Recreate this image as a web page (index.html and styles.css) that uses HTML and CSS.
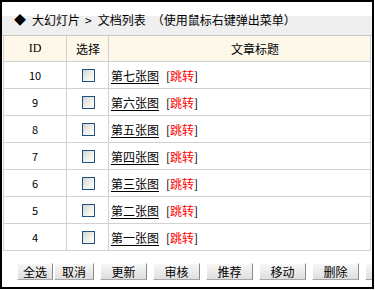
FILE: index.html
```html
<!DOCTYPE html>
<html lang="zh-CN">
<head>
<meta charset="utf-8">
<title>文档列表</title>
<link rel="stylesheet" href="styles.css">
</head>
<body>
<div class="frame">
  <div class="titlebar"><span class="diamond">◆</span><span class="crumb">大幻灯片</span><span class="sep">&gt;</span><span class="crumb">文档列表</span><span class="hint">（使用鼠标右键弹出菜单）</span></div>
  <div class="list">
    <div class="row head">
      <div class="cell c-id"><span class="latin">ID</span></div>
      <div class="cell c-sel">选择</div>
      <div class="cell c-title c-title-head">文章标题</div>
    </div>
    <div class="row">
      <div class="cell c-id">10</div>
      <div class="cell c-sel"><span class="chk"></span></div>
      <div class="cell c-title"><a href="#" class="link">第七张图</a><span class="jump">[<span class="red">跳转</span>]</span></div>
    </div>
    <div class="row">
      <div class="cell c-id">9</div>
      <div class="cell c-sel"><span class="chk"></span></div>
      <div class="cell c-title"><a href="#" class="link">第六张图</a><span class="jump">[<span class="red">跳转</span>]</span></div>
    </div>
    <div class="row">
      <div class="cell c-id">8</div>
      <div class="cell c-sel"><span class="chk"></span></div>
      <div class="cell c-title"><a href="#" class="link">第五张图</a><span class="jump">[<span class="red">跳转</span>]</span></div>
    </div>
    <div class="row">
      <div class="cell c-id">7</div>
      <div class="cell c-sel"><span class="chk"></span></div>
      <div class="cell c-title"><a href="#" class="link">第四张图</a><span class="jump">[<span class="red">跳转</span>]</span></div>
    </div>
    <div class="row">
      <div class="cell c-id">6</div>
      <div class="cell c-sel"><span class="chk"></span></div>
      <div class="cell c-title"><a href="#" class="link">第三张图</a><span class="jump">[<span class="red">跳转</span>]</span></div>
    </div>
    <div class="row">
      <div class="cell c-id">5</div>
      <div class="cell c-sel"><span class="chk"></span></div>
      <div class="cell c-title"><a href="#" class="link">第二张图</a><span class="jump">[<span class="red">跳转</span>]</span></div>
    </div>
    <div class="row">
      <div class="cell c-id">4</div>
      <div class="cell c-sel"><span class="chk"></span></div>
      <div class="cell c-title"><a href="#" class="link">第一张图</a><span class="jump">[<span class="red">跳转</span>]</span></div>
    </div>
  </div>
  <div class="toolbar">
    <button class="btn btn-all">全选</button>
    <button class="btn btn-cancel">取消</button>
    <button class="btn">更新</button>
    <button class="btn">审核</button>
    <button class="btn">推荐</button>
    <button class="btn">移动</button>
    <button class="btn">删除</button>
    <button class="btn">&nbsp;</button>
  </div>
</div>
</body>
</html>
```

FILE: styles.css
```css
html, body {
  margin: 0;
  padding: 0;
  background: #fff;
}

body {
  font-family: "Noto Sans CJK SC", "Liberation Sans", sans-serif;
  font-size: 12px;
  color: #000;
}

.frame {
  width: 370px;
  height: 285px;
  border: 2px solid #000;
  overflow: hidden;
  background: #fff;
}

.titlebar {
  height: 34px;
  box-sizing: border-box;
  padding-top: 2px;
  display: flex;
  align-items: center;
  white-space: nowrap;
  border-bottom: 1px solid #c6c6c6;
  background: linear-gradient(#ffffff 0, #ffffff 42%, #efefef 42%, #efefef 100%);
}

.diamond {
  margin-left: 12px;
  margin-right: 6px;
  font-size: 12px;
  line-height: 12px;
}

.sep {
  margin: 0 6px 0 5px;
}

.hint {
  margin-left: 6px;
}

.list {
  width: 368px;
  margin-left: 1px;
  box-sizing: border-box;
  border-left: 1px solid #d2d2d2;
  border-right: 1px solid #d2d2d2;
}

.row {
  display: grid;
  grid-template-columns: 63px 42px 1fr;
  height: 27px;
  box-sizing: border-box;
  border-bottom: 1px solid #d2d2d2;
}

.row.head {
  height: 26px;
  background: #fdf8ea;
}

.cell {
  display: flex;
  align-items: center;
  box-sizing: border-box;
  white-space: nowrap;
}

.c-id {
  justify-content: center;
  border-right: 1px solid #d2d2d2;
  font-size: 11px;
}

.latin {
  font-family: "Liberation Serif", serif;
  font-size: 12px;
}

.c-sel {
  justify-content: center;
  padding-left: 1px;
  border-right: 1px solid #d2d2d2;
}

.c-title {
  padding-left: 2px;
}

.c-title-head {
  justify-content: center;
  padding-left: 31px;
}

.chk {
  display: inline-block;
  width: 11px;
  height: 11px;
  border: 1px solid #1c5180;
  background: linear-gradient(135deg, #d4d4cf 0%, #f2f2ef 60%, #ffffff 100%);
}

.link {
  color: #000;
  text-decoration: underline;
  text-underline-offset: 2px;
}

.jump {
  margin-left: 7px;
}

.red {
  color: #ff0000;
}

.toolbar {
  display: flex;
  flex-wrap: nowrap;
  padding: 12px 0 0 15px;
}

.btn {
  flex-shrink: 0;
  width: 47px;
  height: 17px;
  margin: 0 0 0 6px;
  padding: 0;
  box-sizing: border-box;
  font-family: "Noto Sans CJK SC", "Liberation Sans", sans-serif;
  font-size: 12px;
  line-height: 14px;
  color: #000;
  border: 1px solid;
  border-color: #ffffff #8a8a8a #a8a8a8 #ffffff;
  background: linear-gradient(#f7f7f7, #dedede);
}

.btn-all {
  width: 36px;
  margin-left: 0;
}

.btn-cancel {
  width: 40px;
  margin-left: 1px;
}
```
